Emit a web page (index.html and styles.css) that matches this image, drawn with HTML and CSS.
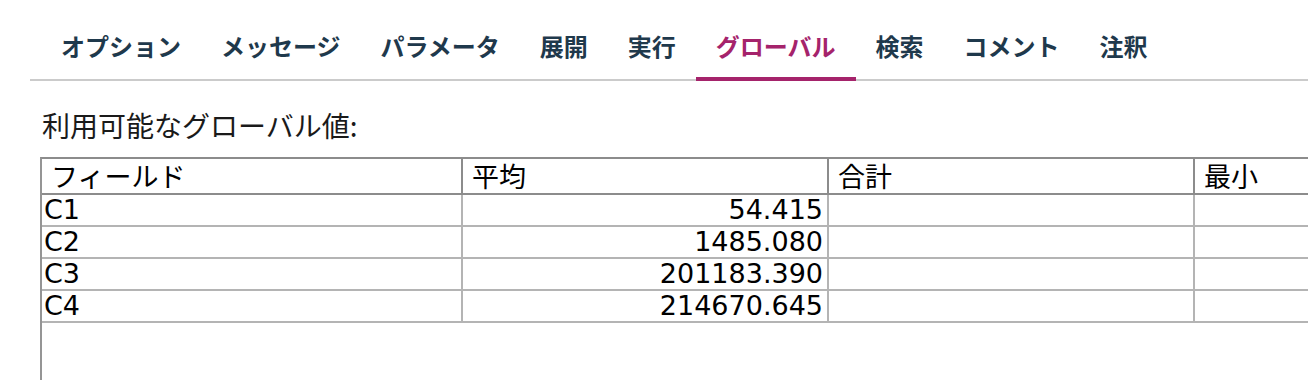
FILE: index.html
```html
<!DOCTYPE html>
<html lang="ja">
<head>
<meta charset="utf-8">
<title>グローバル</title>
<link rel="stylesheet" href="styles.css">
</head>
<body>
<nav class="tabs">
  <ul class="tab-list">
    <li class="tab">オプション</li>
    <li class="tab">メッセージ</li>
    <li class="tab">パラメータ</li>
    <li class="tab">展開</li>
    <li class="tab">実行</li>
    <li class="tab tab-active">グローバル</li>
    <li class="tab">検索</li>
    <li class="tab">コメント</li>
    <li class="tab">注釈</li>
  </ul>
</nav>
<main class="panel">
  <p class="caption">利用可能なグローバル値:</p>
  <div class="scroll-pane">
    <table class="grid">
      <colgroup>
        <col class="col-field">
        <col class="col-num">
        <col class="col-num">
        <col class="col-num">
      </colgroup>
      <thead>
        <tr><th>フィールド</th><th>平均</th><th>合計</th><th>最小</th></tr>
      </thead>
      <tbody>
        <tr><td>C1</td><td class="num">54.415</td><td></td><td></td></tr>
        <tr><td>C2</td><td class="num">1485.080</td><td></td><td></td></tr>
        <tr><td>C3</td><td class="num">201183.390</td><td></td><td></td></tr>
        <tr><td>C4</td><td class="num">214670.645</td><td></td><td></td></tr>
      </tbody>
    </table>
  </div>
</main>
</body>
</html>
```
FILE: styles.css
```css
html, body {
  margin: 0;
  padding: 0;
  background: #ffffff;
  overflow: hidden;
  height: 380px;
}

.tabs {
  margin: 0 0 0 30px;
  padding: 31px 0 0 11px;
  border-bottom: 2px solid #cbcbcb;
}

.tab-list {
  display: flex;
  margin: 0;
  padding: 0;
  list-style: none;
}

.tab {
  font-family: "Noto Sans CJK JP", "Noto Sans", sans-serif;
  font-weight: 700;
  font-size: 24px;
  line-height: 30px;
  color: #1f394c;
  padding: 0 20px 16px;
  border-bottom: 4px solid transparent;
  margin-bottom: -2px;
  white-space: nowrap;
}

.tab-active {
  color: #a5236b;
  border-bottom-color: #a5236b;
}

.panel {
  display: flex;
  flex-direction: column;
}

.caption {
  margin: 27px 0 15px 42px;
  font-family: "Noto Sans CJK JP", "Noto Sans", sans-serif;
  font-size: 28px;
  line-height: 34px;
  color: #1a1a1a;
}

.scroll-pane {
  margin-left: 40px;
  height: 224px;
  border-top: 2px solid #8c8c8c;
  border-left: 2px solid #959595;
  overflow: hidden;
}

.grid {
  table-layout: fixed;
  width: 1519px;
  border-collapse: separate;
  border-spacing: 0;
  font-family: "DejaVu Sans", "Noto Sans CJK JP", sans-serif;
  font-size: 27px;
  color: #000000;
}

.col-field { width: 421px; }
.col-num { width: 366px; }

.grid th {
  font-weight: 400;
  text-align: left;
  height: 30px;
  line-height: 30px;
  padding: 4px 9px 0;
  border-right: 2px solid #8c8c8c;
  border-bottom: 2px solid #8c8c8c;
  white-space: nowrap;
  overflow: hidden;
}

.grid td {
  height: 30px;
  line-height: 30px;
  padding: 0 4px 0 2px;
  border-right: 2px solid #b4b4b4;
  border-bottom: 2px solid #b4b4b4;
  white-space: nowrap;
  overflow: hidden;
}

.grid td.num {
  text-align: right;
}
```
